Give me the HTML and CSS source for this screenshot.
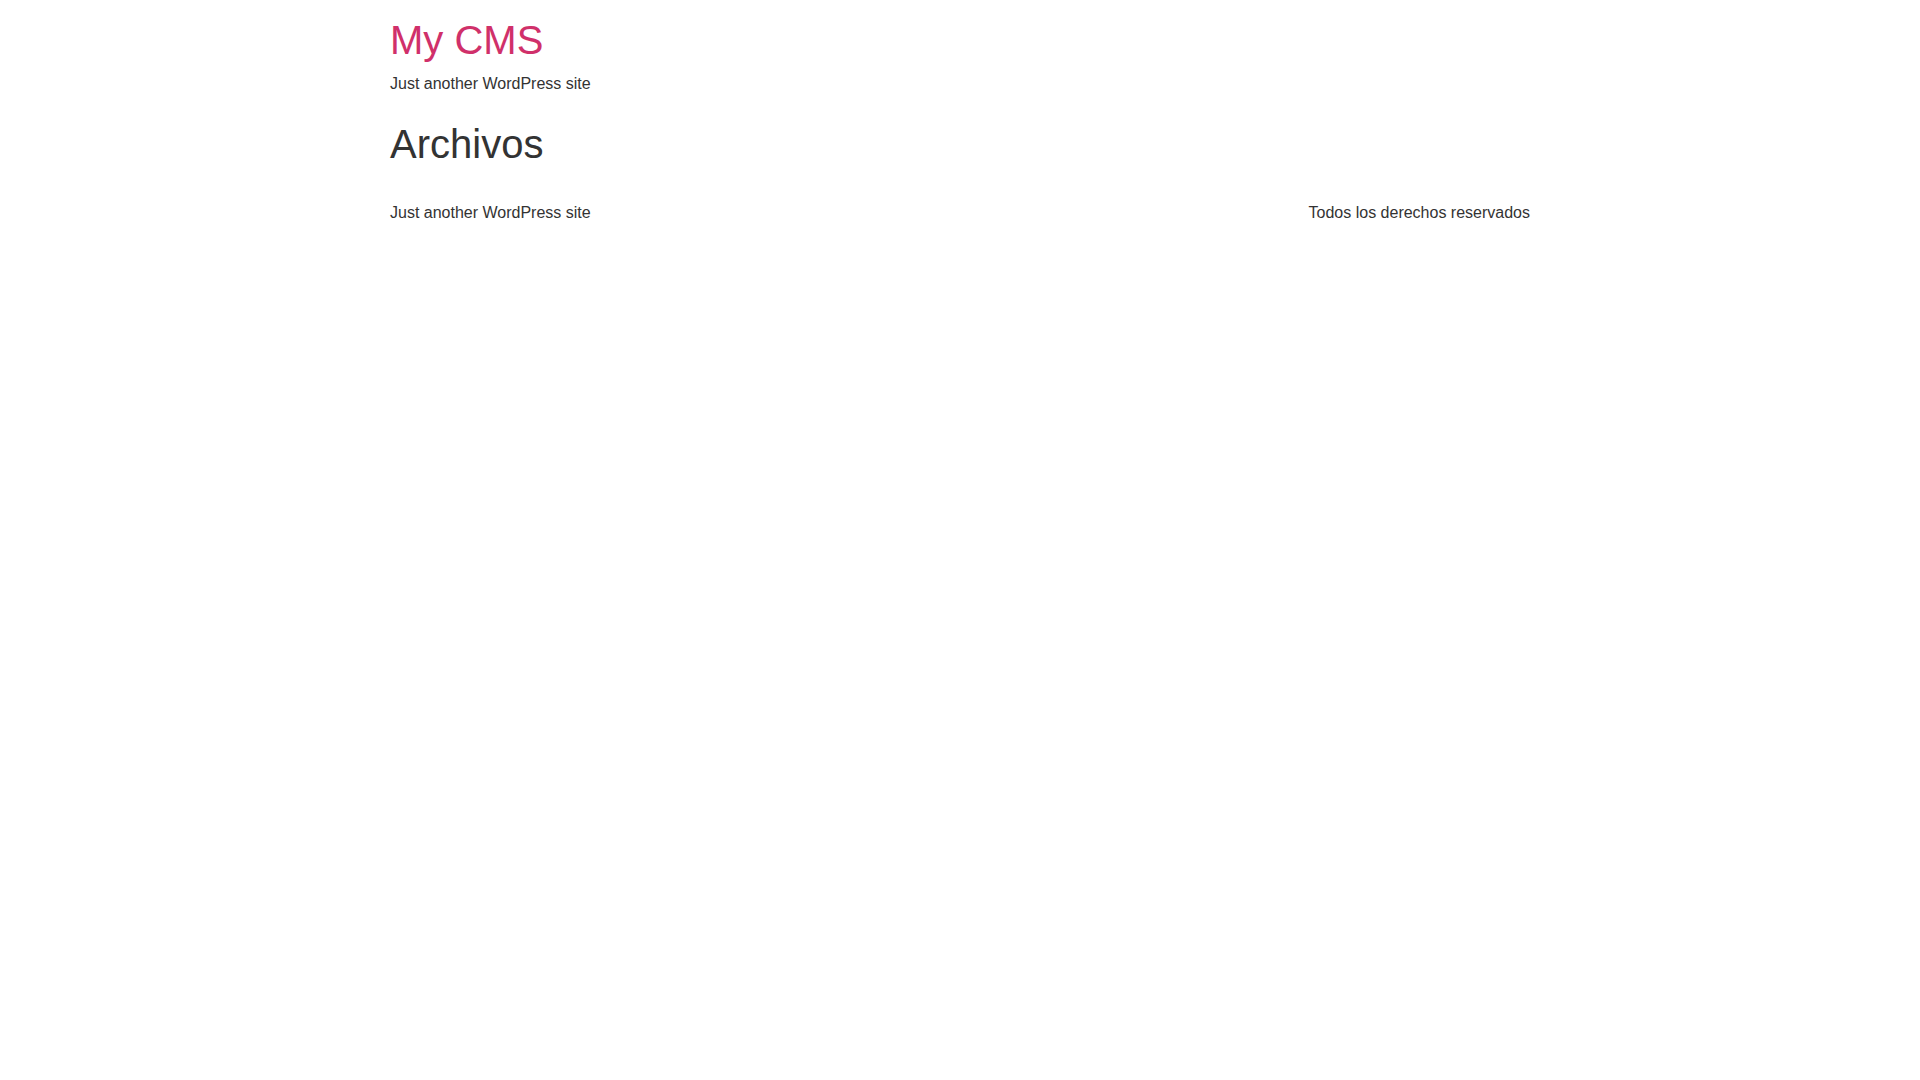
FILE: index.html
```html
<!DOCTYPE html>
<html lang="es">
<head>
<meta charset="utf-8">
<title>Archivos – My CMS</title>
<link rel="stylesheet" href="styles.css">
</head>
<body>
<div class="container">
  <header class="site-header">
    <h1 class="site-title"><a href="#">My CMS</a></h1>
    <p class="site-description">Just another WordPress site</p>
  </header>
  <main class="site-main">
    <h1 class="page-title">Archivos</h1>
  </main>
  <footer class="site-footer">
    <span class="footer-desc">Just another WordPress site</span>
    <span class="footer-rights">Todos los derechos reservados</span>
  </footer>
</div>
</body>
</html>
```

FILE: styles.css
```css
html, body {
  margin: 0;
  padding: 0;
  background: #ffffff;
}
body {
  font-family: "Liberation Sans", Arial, sans-serif;
  font-size: 16px;
  line-height: 1.5;
  color: #333333;
}
.container {
  width: 1140px;
  margin: 0 auto;
  padding: 0;
}
.site-header {
  padding-top: 16px;
}
.site-title {
  margin: 0;
  font-size: 40px;
  font-weight: 400;
  line-height: 1.2;
}
.site-title a {
  color: #d0306a;
  text-decoration: none;
}
.site-description {
  margin: 8px 0 0 0;
}
.site-main {
  padding-top: 24px;
}
.page-title {
  margin: 0;
  font-size: 40px;
  font-weight: 400;
  line-height: 1.2;
  color: #333333;
}
.site-footer {
  display: flex;
  justify-content: space-between;
  margin-top: 33px;
}
```
